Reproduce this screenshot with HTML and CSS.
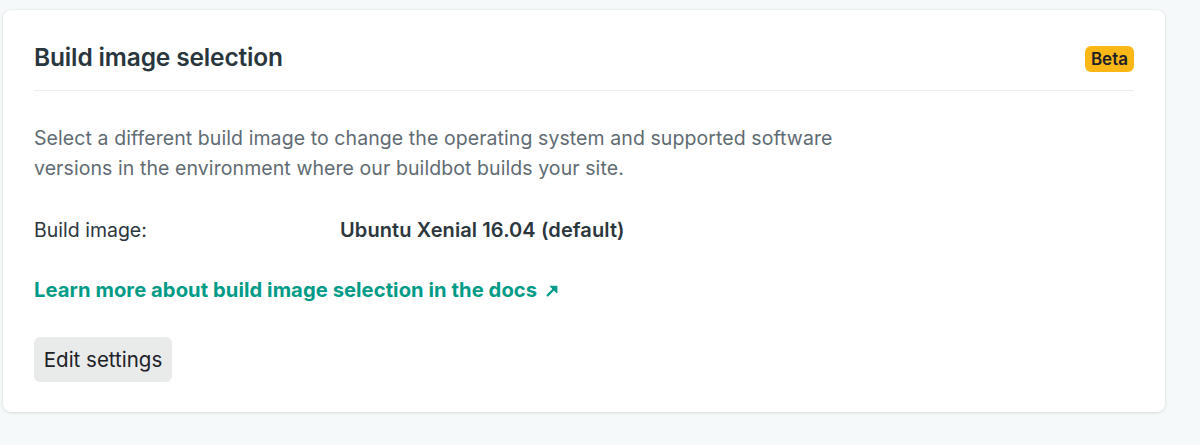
FILE: index.html
```html
<!DOCTYPE html>
<html>
<head>
<meta charset="utf-8">
<link rel="stylesheet" href="styles.css">
</head>
<body>
<div class="page">
  <section class="card">
    <header class="card-header">
      <h2 class="title">Build image selection</h2>
      <span class="badge">Beta</span>
    </header>
    <p class="desc">Select a different build image to change the operating system and supported software versions in the environment where our buildbot builds your site.</p>
    <dl class="field">
      <dt class="label">Build image:</dt>
      <dd class="value">Ubuntu Xenial 16.04 (default)</dd>
    </dl>
    <a class="docs-link" href="#">Learn more about build image selection in the docs <svg class="arrow" width="13" height="13" viewBox="0 0 12 12"><path d="M1.5 10.5 L8.5 3.5" fill="none" stroke="currentColor" stroke-width="2" stroke-linecap="round"/><path d="M4 2 H10 V8 Z" fill="currentColor" stroke="currentColor" stroke-width="1" stroke-linejoin="round"/></svg></a>
    <div class="actions">
      <button class="btn">Edit settings</button>
    </div>
  </section>
</div>
</body>
</html>
```

FILE: styles.css
```css
* { box-sizing: border-box; }
html, body { margin: 0; padding: 0; }
body {
  background: #f5f9f9;
  font-family: Inter, "Noto Sans", sans-serif;
  color: #2c363d;
  width: 1200px;
  height: 445px;
  overflow: hidden;
}
.page {
  padding: 10px 35px 0 3px;
}
.card {
  background: #fff;
  border-radius: 8px;
  box-shadow: 0 1px 3px rgba(20, 40, 50, 0.12), 0 0 0 1px rgba(20, 40, 50, 0.02);
  padding: 31px 31px 30px 31px;
  height: 402px;
}
.card-header {
  display: flex;
  align-items: center;
  justify-content: space-between;
  padding-bottom: 17px;
  border-bottom: 1px solid #eceeef;
}
.title {
  margin: 0;
  font-size: 24.5px;
  font-weight: 600;
  line-height: 32px;
  color: #2a363d;
  letter-spacing: -0.15px;
}
.badge {
  background: #fbb716;
  color: #1d2127;
  font-size: 17px;
  font-weight: 600;
  border-radius: 6px;
  padding: 2px 6px;
  line-height: 22px;
  margin-top: 4px;
}
.desc {
  margin: 32px 0 0;
  font-size: 19.5px;
  line-height: 30px;
  color: #5f6b73;
  max-width: 830px;
  letter-spacing: 0.08px;
}
.field {
  display: flex;
  margin: 32px 0 0;
  font-size: 19.5px;
  line-height: 30px;
}
.label {
  width: 306px;
  color: #2c363d;
}
.value {
  margin: 0;
  font-size: 20px;
  font-weight: 600;
  color: #2c363d;
  letter-spacing: 0.1px;
}
.docs-link {
  display: inline-block;
  margin-top: 30px;
  font-size: 20.2px;
  line-height: 30px;
  font-weight: 700;
  color: #009b87;
  text-decoration: none;
  letter-spacing: 0.06px;
}
.arrow { vertical-align: 0; margin-left: 4px; }
.actions { margin-top: 31px; }
.btn {
  font-family: inherit;
  font-size: 20.5px;
  line-height: 25px;
  color: #1d2127;
  background: #e9ebeb;
  border: 0;
  border-radius: 6px;
  padding: 10px 0;
  width: 138px;
  height: 45px;
  margin-top: 1px;
}
```
